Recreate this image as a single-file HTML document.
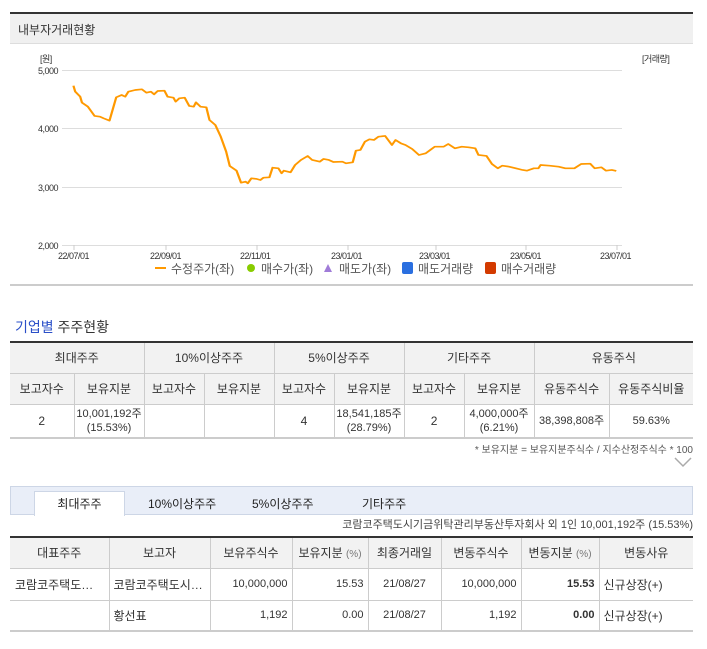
<!DOCTYPE html>
<html><head><meta charset="utf-8"><style>
*{margin:0;padding:0;box-sizing:border-box}
body{width:707px;height:649px;background:#fff;position:relative;overflow:hidden;font-family:"Liberation Sans","Noto Sans CJK KR",sans-serif;color:#333}
.a{position:absolute;white-space:nowrap}
table{border-collapse:collapse;position:absolute;table-layout:fixed}
td{border:1px solid #ccc;text-align:center;font-size:12px;color:#333;overflow:hidden;white-space:nowrap}
.h td{background:#f2f2f2}
</style></head><body>
<div class="a" style="left:10px;top:12px;width:683px;height:32px;background:#f0f0f0;border-top:2px solid #333;border-bottom:1px solid #ddd"></div>
<div class="a" style="left:18px;top:21px;font-size:12px;color:#333">내부자거래현황</div>
<div class="a" style="left:10px;top:284px;width:683px;height:2px;background:#ccc"></div>

<svg class="a" style="left:0;top:0" width="707" height="290">
<g stroke="#ddd" stroke-width="1">
<line x1="62" y1="70.5" x2="622" y2="70.5"/><line x1="62" y1="128.5" x2="622" y2="128.5"/><line x1="62" y1="187.5" x2="622" y2="187.5"/><line x1="62" y1="245.5" x2="622" y2="245.5"/>
</g>
<g stroke="#ccc"><line x1="74" y1="245" x2="74" y2="250"/><line x1="166" y1="245" x2="166" y2="250"/><line x1="257" y1="245" x2="257" y2="250"/><line x1="348" y1="245" x2="348" y2="250"/><line x1="436" y1="245" x2="436" y2="250"/><line x1="526" y1="245" x2="526" y2="250"/><line x1="617" y1="245" x2="617" y2="250"/></g>
<g font-size="9" fill="#333" font-family="Liberation Sans,sans-serif" letter-spacing="-0.5">
<text x="40" y="62">[원]</text>
<text x="38" y="74">5,000</text><text x="38" y="132">4,000</text><text x="38" y="191">3,000</text><text x="38" y="249">2,000</text>
<text x="642" y="62">[거래량]</text>
<text x="58" y="259">22/07/01</text><text x="150" y="259">22/09/01</text><text x="240" y="259">22/11/01</text><text x="331" y="259">23/01/01</text><text x="419" y="259">23/03/01</text><text x="510" y="259">23/05/01</text><text x="600" y="259">23/07/01</text>
</g>
<g transform="scale(0.4505,0.3333)">
<polyline fill="none" stroke="#f90" stroke-width="5" stroke-linejoin="round" points="163,257 167,275 178,290 182,308 195,320 210,348 222,350 230,355 243,362 258,292 270,285 278,290 285,275 300,270 315,268 325,278 335,275 342,283 350,273 365,272 372,290 385,293 390,305 398,295 410,293 420,318 430,320 435,307 445,320 458,322 465,360 478,375 490,410 502,455 510,498 525,512 535,548 545,545 550,550 558,535 570,537 578,540 585,533 598,532 605,503 618,505 625,520 630,512 645,517 655,495 668,480 683,468 693,480 710,485 718,477 730,480 740,486 760,485 768,490 783,487 790,452 800,450 810,425 820,418 830,420 840,410 855,408 870,435 878,420 890,430 900,435 915,447 930,465 945,460 955,450 965,440 985,440 995,432 1010,445 1025,440 1040,442 1055,445 1062,465 1080,468 1092,492 1105,505 1115,497 1130,500 1145,505 1160,510 1170,512 1185,505 1195,505 1200,495 1220,497 1240,500 1255,505 1275,505 1290,492 1310,491 1320,505 1335,502 1345,512 1358,510 1368,513"/>
</g>
<rect x="155" y="267" width="11" height="2" fill="#f90"/>
<circle cx="251" cy="268" r="4" fill="#8c0"/>
<polygon points="328,264 332,272 324,272" fill="#a07cd8"/>
<rect x="402" y="262" width="11" height="12" rx="2" fill="#2a6fe0"/>
<rect x="485" y="262" width="11" height="12" rx="2" fill="#d33a00"/>
<g font-size="12" fill="#555"><text x="171" y="273">수정주가(좌)</text><text x="261" y="273">매수가(좌)</text><text x="339" y="273">매도가(좌)</text><text x="418" y="273">매도거래량</text><text x="501" y="273">매수거래량</text></g>
</svg>

<div class="a" style="left:15px;top:317px;font-size:14px;color:#333"><span style="color:#2a4fc8">기업별</span> 주주현황</div>
<table style="left:10px;top:341px;width:683px;border-top:2px solid #333;border-bottom:2px solid #ccc">
<colgroup><col style="width:64px"><col style="width:70px"><col style="width:60px"><col style="width:70px"><col style="width:60px"><col style="width:70px"><col style="width:60px"><col style="width:70px"><col style="width:75px"><col style="width:84px"></colgroup>
<tr class="h" style="height:31px"><td colspan="2" style="border-left:0">최대주주</td><td colspan="2">10%이상주주</td><td colspan="2">5%이상주주</td><td colspan="2">기타주주</td><td colspan="2" style="border-right:0">유동주식</td></tr>
<tr class="h" style="height:31px"><td style="border-left:0">보고자수</td><td>보유지분</td><td>보고자수</td><td>보유지분</td><td>보고자수</td><td>보유지분</td><td>보고자수</td><td>보유지분</td><td>유동주식수</td><td style="border-right:0">유동주식비율</td></tr>
<tr style="height:34px;line-height:14px;font-size:11px"><td style="border-left:0">2</td><td style="font-size:11px">10,001,192주<br>(15.53%)</td><td></td><td></td><td>4</td><td style="font-size:11px">18,541,185주<br>(28.79%)</td><td>2</td><td style="font-size:11px">4,000,000주<br>(6.21%)</td><td style="font-size:11px">38,398,808주</td><td style="border-right:0;font-size:11px">59.63%</td></tr>
</table>
<div class="a" style="right:14px;top:441px;font-size:10px;color:#555">* 보유지분 = 보유지분주식수 / 지수산정주식수 * 100</div>
<svg class="a" style="left:674px;top:456px" width="18" height="12"><polyline points="1,2 9,10 17,2" fill="none" stroke="#aaa" stroke-width="1.5"/></svg>

<div class="a" style="left:10px;top:486px;width:683px;height:29px;background:#e9eef8;border:1px solid #cdd6e6"></div>
<div class="a" style="left:34px;top:491px;width:91px;height:25px;background:#fff;border:1px solid #cdd6e6;border-bottom:0"></div>
<div class="a" style="left:34px;top:495px;width:91px;text-align:center;font-size:12px;color:#222">최대주주</div>
<div class="a" style="left:148px;top:495px;font-size:12px;color:#222">10%이상주주</div>
<div class="a" style="left:252px;top:495px;font-size:12px;color:#222">5%이상주주</div>
<div class="a" style="left:362px;top:495px;font-size:12px;color:#222">기타주주</div>
<div class="a" style="right:14px;top:516px;font-size:11px;color:#444">코람코주택도시기금위탁관리부동산투자회사 외 1인 10,001,192주 (15.53%)</div>
<table style="left:10px;top:536px;width:683px;border-top:2px solid #333;border-bottom:2px solid #ccc">
<colgroup><col style="width:99px"><col style="width:101px"><col style="width:82px"><col style="width:76px"><col style="width:73px"><col style="width:80px"><col style="width:78px"><col style="width:94px"></colgroup>
<tr class="h" style="height:31px"><td style="border-left:0">대표주주</td><td>보고자</td><td>보유주식수</td><td>보유지분 <span style="font-size:10px;color:#777">(%)</span></td><td>최종거래일</td><td>변동주식수</td><td>변동지분 <span style="font-size:10px;color:#777">(%)</span></td><td style="border-right:0">변동사유</td></tr>
<tr style="height:32px"><td style="border-left:0;text-align:left;padding-left:5px">코람코주택도…</td><td style="text-align:left;padding-left:4px">코람코주택도시…</td><td style="text-align:right;padding-right:4px;font-size:11px">10,000,000</td><td style="text-align:right;padding-right:4px;font-size:11px">15.53</td><td style="font-size:11px">21/08/27</td><td style="text-align:right;padding-right:4px;font-size:11px">10,000,000</td><td style="text-align:right;padding-right:4px;font-size:11px;font-weight:bold">15.53</td><td style="border-right:0;text-align:left;padding-left:4px">신규상장(+)</td></tr>
<tr style="height:31px"><td style="border-left:0"></td><td style="text-align:left;padding-left:4px">황선표</td><td style="text-align:right;padding-right:4px;font-size:11px">1,192</td><td style="text-align:right;padding-right:4px;font-size:11px">0.00</td><td style="font-size:11px">21/08/27</td><td style="text-align:right;padding-right:4px;font-size:11px">1,192</td><td style="text-align:right;padding-right:4px;font-size:11px;font-weight:bold">0.00</td><td style="border-right:0;text-align:left;padding-left:4px">신규상장(+)</td></tr>
</table>
</body></html>
